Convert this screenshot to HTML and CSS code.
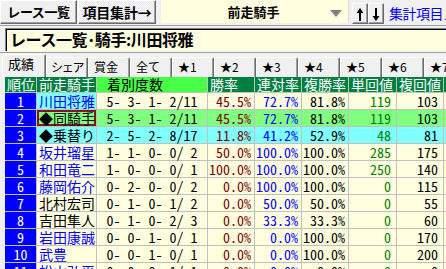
FILE: index.html
```html
<!DOCTYPE html>
<html lang="ja">
<head>
<meta charset="utf-8">
<title>レース一覧</title>
<link rel="stylesheet" href="styles.css">
</head>
<body>
<div class="app">
  <div class="toolbar">
    <button class="btn btn-list">レース一覧</button>
    <button class="btn btn-on">項目集計→</button>
    <div class="combo"><span class="combo-text">前走騎手</span><span class="combo-arrow"></span></div>
    <div class="arrows">
      <button class="abtn"><svg width="10" height="16" viewBox="0 0 10 16"><path d="M5 2 L1.5 7 H4 V15 H6 V7 H8.5 Z" fill="#000"/></svg></button>
      <button class="abtn"><svg width="10" height="16" viewBox="0 0 10 16"><path d="M5 15 L1.5 10 H4 V2 H6 V10 H8.5 Z" fill="#000"/></svg></button>
    </div>
    <a class="link">集計項目メニュー</a>
  </div>
  <div class="title-area">
    <div class="title">レース一覧･騎手:川田将雅</div>
  </div>
  <div class="tabs">
    <div class="tab tab-sel">成績</div>
    <div class="tab tab-kana">シェア</div>
    <div class="tab">賞金</div>
    <div class="tab">全て</div>
    <div class="tab">★1</div>
    <div class="tab">★2</div>
    <div class="tab">★3</div>
    <div class="tab">★4</div>
    <div class="tab">★5</div>
    <div class="tab">★6</div>
    <div class="tab">★7</div>
  </div>
  <div class="grid">
    <div class="h">順位</div><div class="h">前走騎手</div><div class="h h-lg">着別度数</div><div class="h">勝率</div><div class="h">連対率</div><div class="h">複勝率</div><div class="h">単回値</div><div class="h">複回値</div><div class="h"></div>

    <div class="rk">1</div><div class="nm blue cyan">川田将雅</div><div class="c fd">5- 3- 1- 2/11</div><div class="c n red">45.5%</div><div class="c n bl">72.7%</div><div class="c n">81.8%</div><div class="c n v grn">119</div><div class="c n v">103</div><div class="c"></div>

    <div class="rk">2</div><div class="nm gr focus">◆同騎手</div><div class="c gr fd">5- 3- 1- 2/11</div><div class="c gr n red">45.5%</div><div class="c gr n bl">72.7%</div><div class="c gr n">81.8%</div><div class="c gr n v grn">119</div><div class="c gr n v">103</div><div class="c gr"></div>

    <div class="rk">3</div><div class="nm cyan">◆乗替り</div><div class="c cyan fd">2- 5- 2- 8/17</div><div class="c cyan n red">11.8%</div><div class="c cyan n bl">41.2%</div><div class="c cyan n">52.9%</div><div class="c cyan n v grn">48</div><div class="c cyan n v">81</div><div class="c cyan"></div>

    <div class="rk">4</div><div class="nm blue">坂井瑠星</div><div class="c fd">1- 1- 0- 0/ 2</div><div class="c n red">50.0%</div><div class="c n bl">100.0%</div><div class="c n">100.0%</div><div class="c n v grn">285</div><div class="c n v">175</div><div class="c"></div>

    <div class="rk">5</div><div class="nm blue">和田竜二</div><div class="c fd">1- 0- 0- 0/ 1</div><div class="c n red">100.0%</div><div class="c n bl">100.0%</div><div class="c n">100.0%</div><div class="c n v grn">250</div><div class="c n v">140</div><div class="c"></div>

    <div class="rk">6</div><div class="nm blue">藤岡佑介</div><div class="c fd">0- 2- 0- 0/ 2</div><div class="c n red">0.0%</div><div class="c n bl">100.0%</div><div class="c n">100.0%</div><div class="c n v grn">0</div><div class="c n v">115</div><div class="c"></div>

    <div class="rk">7</div><div class="nm">北村宏司</div><div class="c fd">0- 1- 0- 1/ 2</div><div class="c n red">0.0%</div><div class="c n bl">50.0%</div><div class="c n">50.0%</div><div class="c n v grn">0</div><div class="c n v">55</div><div class="c"></div>

    <div class="rk">8</div><div class="nm">吉田隼人</div><div class="c fd">0- 1- 0- 2/ 3</div><div class="c n red">0.0%</div><div class="c n bl">33.3%</div><div class="c n">33.3%</div><div class="c n v grn">0</div><div class="c n v">60</div><div class="c"></div>

    <div class="rk">9</div><div class="nm blue">岩田康誠</div><div class="c fd">0- 0- 1- 0/ 1</div><div class="c n red">0.0%</div><div class="c n bl">0.0%</div><div class="c n">100.0%</div><div class="c n v grn">0</div><div class="c n v">170</div><div class="c"></div>

    <div class="rk">10</div><div class="nm blue">武豊</div><div class="c fd">0- 0- 1- 0/ 1</div><div class="c n red">0.0%</div><div class="c n bl">0.0%</div><div class="c n">100.0%</div><div class="c n v grn">0</div><div class="c n v">200</div><div class="c"></div>

    <div class="rk">11</div><div class="nm blue">松山弘平</div><div class="c fd">0- 0- 0- 1/ 1</div><div class="c n red">0.0%</div><div class="c n bl">0.0%</div><div class="c n">0.0%</div><div class="c n v grn">0</div><div class="c n v">0</div><div class="c"></div>
  </div>
</div>
</body>
</html>
```

FILE: styles.css
```css
html, body {
  margin: 0;
  padding: 0;
}
body {
  background: #f0f0f0;
  font-family: "Noto Sans CJK JP", "Noto Sans", sans-serif;
  color: #000;
  width: 446px;
  height: 269px;
  overflow: hidden;
}
.app {
  width: 446px;
  height: 269px;
  overflow: hidden;
}

/* toolbar */
.toolbar {
  display: flex;
  align-items: flex-start;
  height: 25px;
  white-space: nowrap;
}
.toolbar > * {
  flex: none;
}
.btn {
  box-sizing: border-box;
  height: 24px;
  margin: 0;
  padding: 0;
  font-family: "Noto Sans CJK JP", sans-serif;
  font-weight: bold;
  font-size: 13px;
  line-height: 20px;
  letter-spacing: -0.4px;
  color: #000;
  background: #f0f0f0;
  border: 1px solid;
  border-color: #fff #6a6a6a #6a6a6a #fff;
  box-shadow: inset -1px -1px #a0a0a0;
}
.btn-list {
  width: 77px;
}
.btn-on {
  width: 78px;
  margin-left: 1px;
  font-size: 14px;
  letter-spacing: -0.2px;
  background: repeating-conic-gradient(#ffffff 0 25%, #e3e3e3 0 50%) 0 0 / 2px 2px;
}
.combo {
  box-sizing: border-box;
  width: 188px;
  height: 23px;
  margin-left: 5px;
  background: #ffffe0;
  border-right: 1px solid #d8d8d8;
  display: flex;
  align-items: center;
  justify-content: center;
  position: relative;
}
.combo-text {
  font-weight: bold;
  font-size: 13px;
  line-height: 20px;
  margin-right: 2px;
}
.combo-arrow {
  position: absolute;
  right: 6px;
  top: 10px;
  width: 0;
  height: 0;
  border-left: 6px solid transparent;
  border-right: 6px solid transparent;
  border-top: 7px solid #808080;
}
.arrows {
  display: flex;
  margin-left: 3px;
  margin-top: 3px;
}
.abtn {
  box-sizing: border-box;
  width: 16px;
  height: 21px;
  padding: 0;
  margin: 0;
  background: #f0f0f0;
  border: 1px solid;
  border-color: #fff #6a6a6a #6a6a6a #fff;
  box-shadow: inset -1px -1px #a0a0a0;
  display: flex;
  align-items: center;
  justify-content: center;
}
.link {
  margin-left: 5px;
  margin-top: 3px;
  font-size: 14px;
  line-height: 20px;
  color: #0000ff;
  letter-spacing: -0.5px;
}

/* title */
.title-area {
  border-top: 1px solid #a0a0a0;
  border-bottom: 1px solid #a0a0a0;
  padding: 2px 0 1px 5px;
}
.title {
  box-sizing: border-box;
  height: 23px;
  background: #ffffe0;
  border-top: 1px solid #808080;
  border-left: 1px solid #808080;
  box-shadow: inset 1px 1px #000;
  padding-left: 4px;
  font-weight: bold;
  font-size: 16px;
  line-height: 21px;
  letter-spacing: -0.4px;
  white-space: nowrap;
}

/* tabs */
.tabs {
  display: flex;
  align-items: flex-end;
  height: 24px;
  padding-left: 2px;
}
.tab {
  box-sizing: border-box;
  flex: none;
  width: 42px;
  height: 20px;
  padding-left: 5px;
  font-size: 12px;
  line-height: 18px;
  white-space: nowrap;
  overflow: hidden;
  border-top: 1px solid #fff;
  border-left: 1px solid #fff;
  border-right: 1px solid #6a6a6a;
  border-top-left-radius: 2px;
  border-top-right-radius: 2px;
  box-shadow: inset -1px 0 #a0a0a0;
}
.tab-kana {
  padding-left: 4px;
  letter-spacing: -1.2px;
}
.tab-sel {
  width: 44px;
  height: 23px;
  padding-left: 5px;
  line-height: 17px;
  font-size: 13px;
}

/* grid */
.grid {
  margin-left: 5px;
  display: grid;
  grid-template-columns: 32px 60px 111px 47px 47px 47px 48px 47px 40px;
  grid-auto-rows: 17px;
  grid-template-rows: 16px;
  width: 480px;
}
.grid > div {
  box-sizing: border-box;
  border-right: 1px solid #c0c0c0;
  border-bottom: 1px solid #c0c0c0;
  white-space: pre;
  font-size: 14px;
  line-height: 16px;
}
.grid > .h {
  background: #008040;
  color: #fff;
  padding-left: 2px;
  line-height: 15px;
  border-color: #b8c8b8;
}
.grid > .h-lg {
  background: #48ff48;
  color: #000;
  padding-left: 10px;
}
.rk {
  background: #0000ff;
  color: #fff;
  text-align: center;
  font-family: "Noto Sans Mono CJK JP", "Liberation Mono", monospace;
}
.nm {
  background: #ffffe0;
  padding-left: 2px;
}
.c {
  background: #ffffe0;
  font-family: "Noto Sans Mono CJK JP", "Liberation Mono", monospace;
}
.fd {
  text-align: center;
}
.n {
  text-align: right;
  padding-right: 3px;
}
.v {
  padding-right: 5px;
}
.grid > .cyan {
  background: #80ffff;
}
.grid > .gr {
  background: #80ff80;
}
.blue { color: #0000ff; }
.red { color: #800000; }
.bl { color: #0000ff; }
.grn { color: #008000; }
.focus {
  box-shadow: inset 0 0 0 2px #801818;
}
```
